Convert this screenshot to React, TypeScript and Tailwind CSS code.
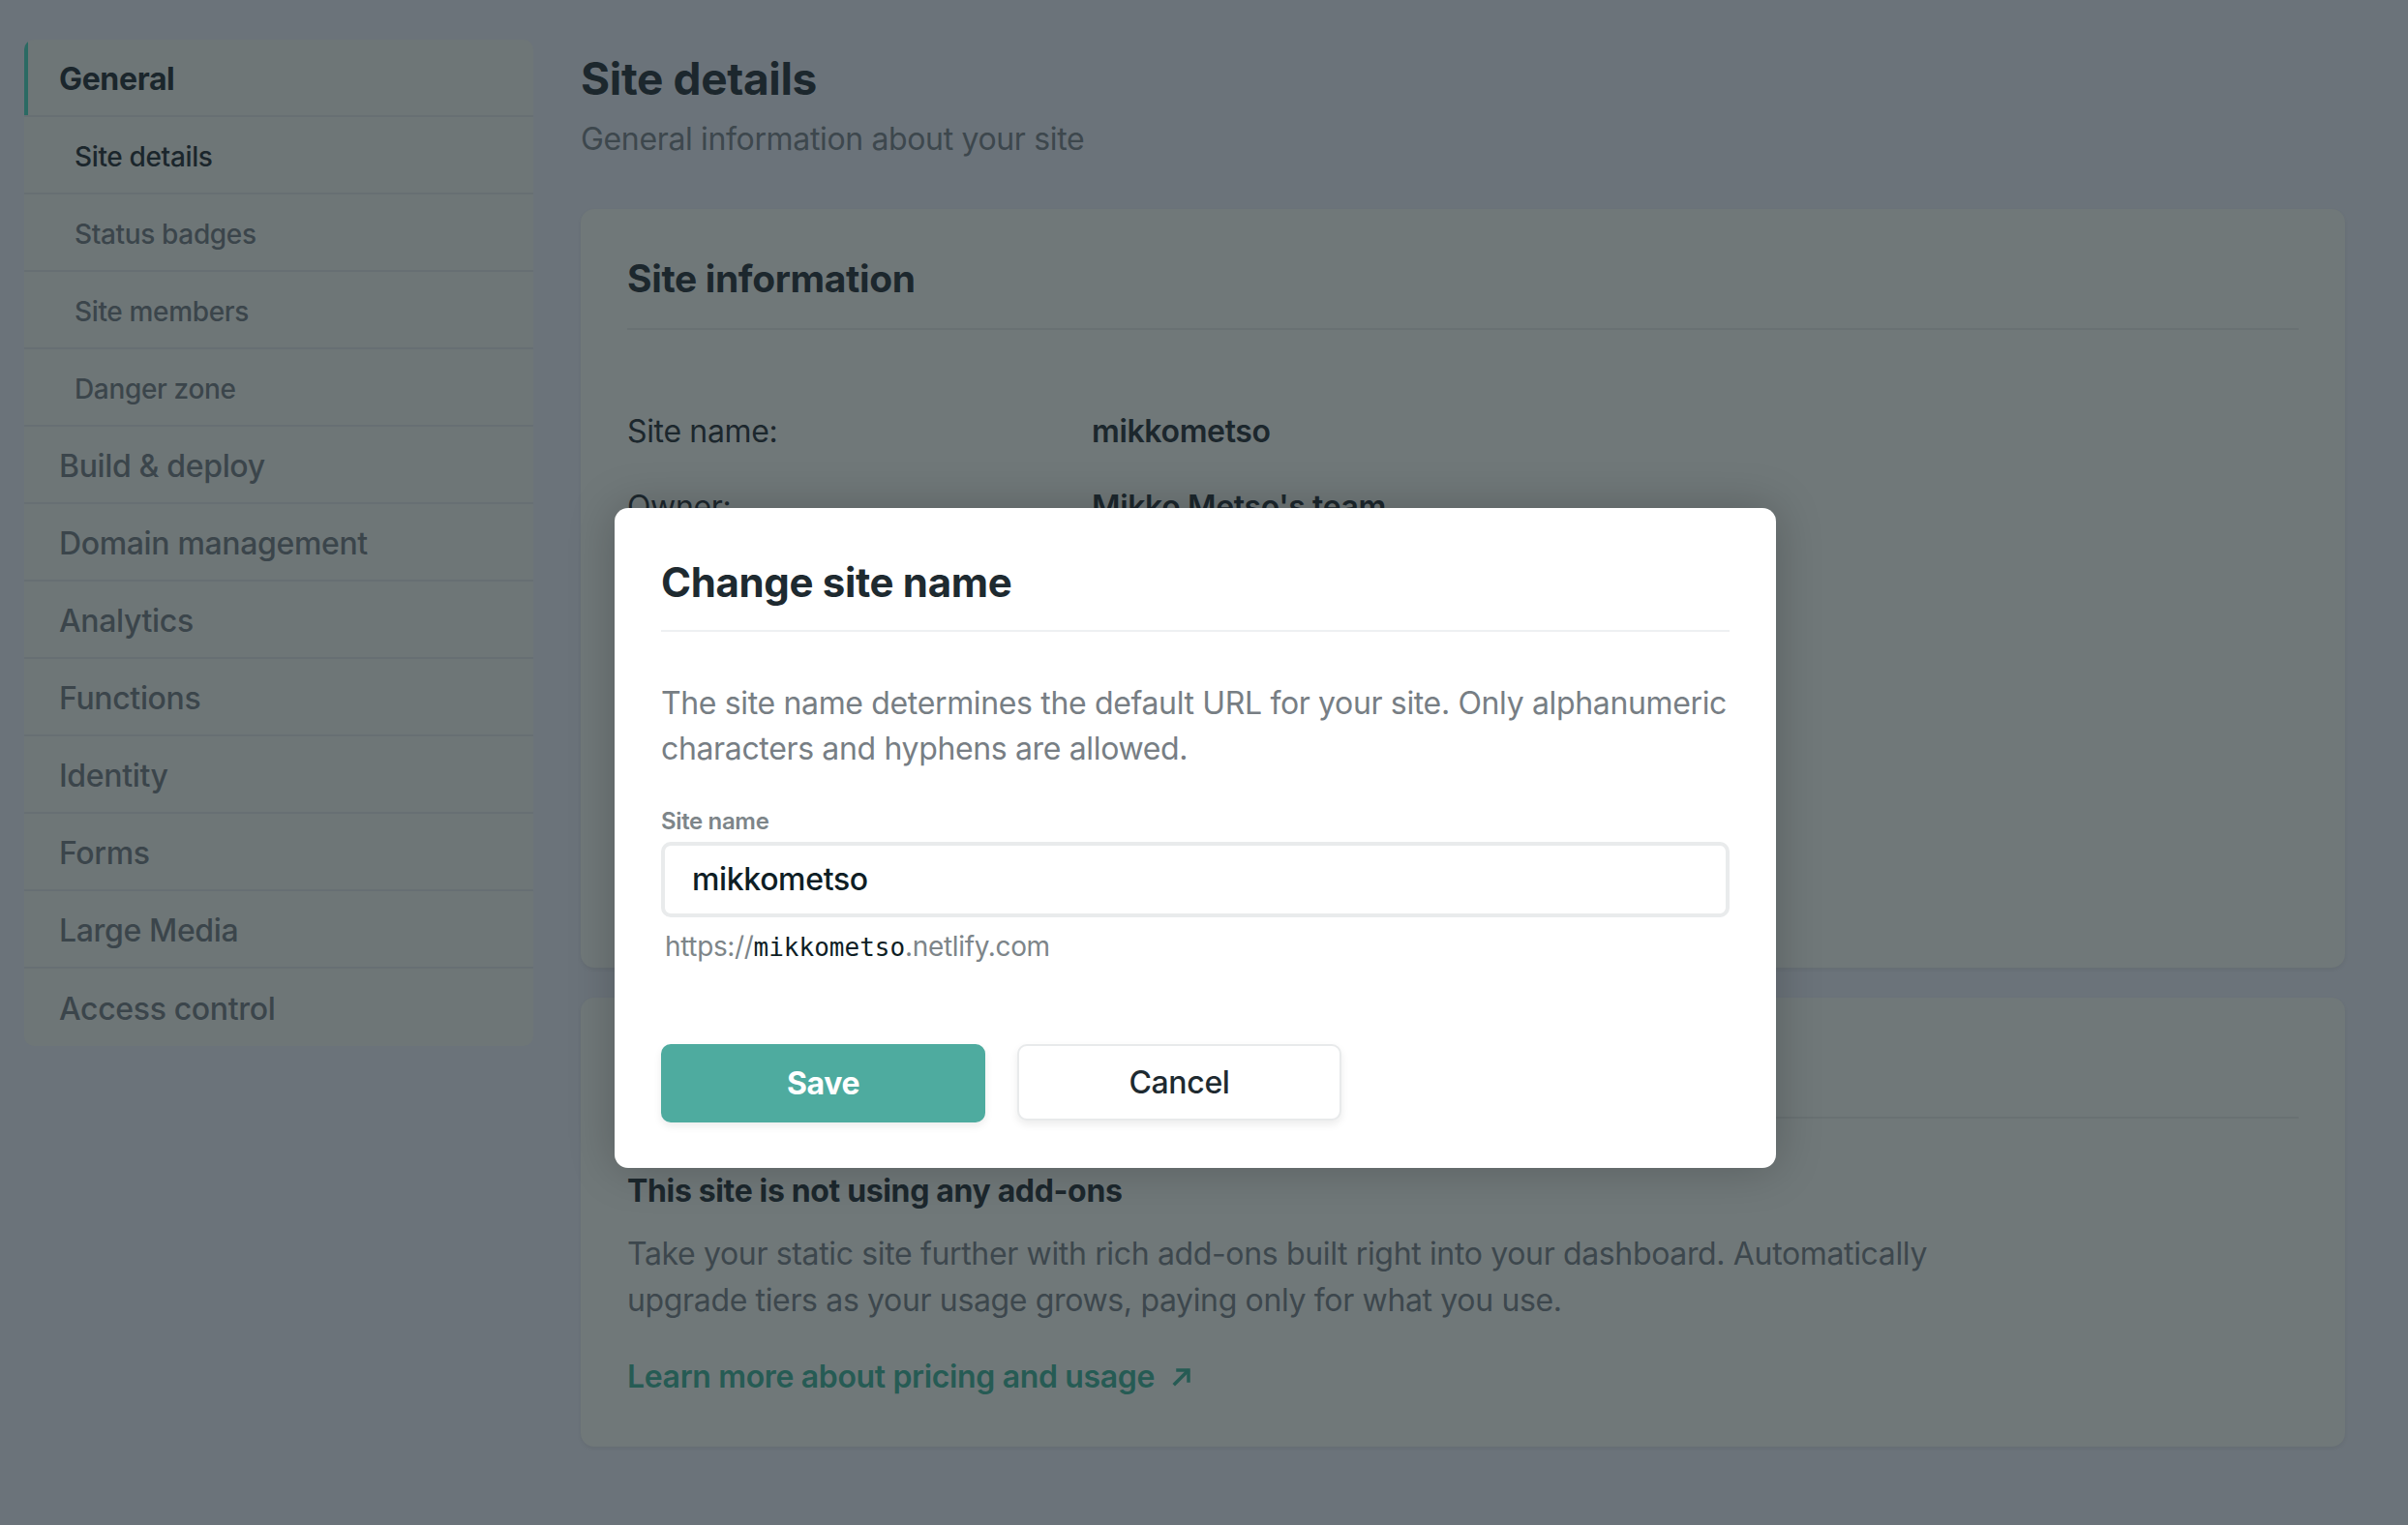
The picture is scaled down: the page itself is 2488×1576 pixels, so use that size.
import React from "react";

const font = { fontFamily: "Inter, 'Noto Sans', sans-serif" };

function SideItem({ label, sub, active, dark }: { label: string; sub?: boolean; active?: boolean; dark?: boolean }) {
  return (
    <div
      className={
        "relative flex h-[80px] items-center border-b-2 border-[#676f73] pt-[4px] " +
        (sub ? "pl-[52px] text-[28px] font-medium " : "pl-[36px] text-[32px] font-medium ") +
        (dark ? "text-[#1b262c] " : "text-[#3b454b] ")
      }
    >
      {active && <div className="absolute left-0 top-0 h-full w-[4px] bg-[#2b6a63]" />}
      <span className={active ? "font-bold" : ""}>{label}</span>
    </div>
  );
}

function InfoRow({ label, value }: { label: string; value: string }) {
  return (
    <div className="flex h-[78px] items-center text-[32px] text-[#1c272d]">
      <div className="w-[480px]">{label}</div>
      <div className="font-semibold">{value}</div>
    </div>
  );
}

export default function App() {
  return (
    <div style={font} className="relative h-[1576px] w-[2488px] overflow-hidden bg-[#6b737a] tracking-[-0.022em]">
      <div className="flex gap-[49px] pl-[25px] pt-[41px]">
        {/* Sidebar */}
        <div className="w-[526px] shrink-0 self-start overflow-hidden rounded-[10px] bg-[#6e7677] [&>div:last-child]:border-b-0">
          <SideItem label="General" active dark />
          <SideItem label="Site details" sub dark />
          <SideItem label="Status badges" sub />
          <SideItem label="Site members" sub />
          <SideItem label="Danger zone" sub />
          <SideItem label="Build & deploy" />
          <SideItem label="Domain management" />
          <SideItem label="Analytics" />
          <SideItem label="Functions" />
          <SideItem label="Identity" />
          <SideItem label="Forms" />
          <SideItem label="Large Media" />
          <SideItem label="Access control" />
        </div>

        {/* Main */}
        <div className="flex w-[1823px] flex-col">
          <h1 className="pt-[2px] text-[46px] font-bold leading-[76px] text-[#1c272d]">Site details</h1>
          <p className="text-[32px] leading-[50px] text-[#3d474d]">General information about your site</p>

          <div className="mt-[47px] h-[784px] rounded-[14px] bg-[#707879] px-[48px] pt-[43px] shadow-[0_2px_4px_rgba(0,0,0,0.06)]">
            <div className="border-b-2 border-[#697173] pb-[24px]">
              <h2 className="pt-[2px] text-[39px] font-bold leading-[54px] text-[#1c272d]">Site information</h2>
            </div>
            <div className="mt-[66px] flex flex-col">
              <InfoRow label="Site name:" value="mikkometso" />
              <InfoRow label="Owner:" value="Mikko Metso's team" />
            </div>
          </div>

          <div className="mt-[31px] rounded-[14px] bg-[#707879] px-[48px] pb-[48px] pt-[43px] shadow-[0_2px_4px_rgba(0,0,0,0.06)]">
            <div className="h-[56px] border-b-2 border-[#697173] pb-[24px] box-content" />
            <h3 className="mt-[51px] text-[32px] font-bold leading-[48px] text-[#1c272d]">This site is not using any add-ons</h3>
            <p className="mt-[17px] max-w-[1380px] text-[32px] leading-[48px] text-[#3d474d]">
              Take your static site further with rich add-ons built right into your dashboard. Automatically upgrade tiers as your usage grows, paying only for what you use.
            </p>
            <a className="mt-[31px] flex items-center gap-[16px] text-[32px] font-semibold leading-[48px] text-[#265b54]">
              Learn more about pricing and usage
              <svg width="24" height="24" viewBox="0 0 24 24" fill="none" stroke="#265b54" strokeWidth="3.5" strokeLinecap="square">
                <path d="M5 19L18 6" />
                <path d="M8 5h11v11" />
              </svg>
            </a>
          </div>
        </div>
      </div>

      {/* Modal */}
      <div className="absolute left-[635px] top-[525px] w-[1200px] rounded-[14px] bg-white px-[48px] pb-[47px] pt-[48px] shadow-[0_0_48px_rgba(0,0,0,0.22)]">
        <div className="border-b-2 border-[#eef0f2] pb-[20px]">
          <h2 className="text-[42px] font-bold leading-[58px] text-[#1e2a30]">Change site name</h2>
        </div>
        <p className="mt-[50px] text-[32px] leading-[47px] text-[#777e84]">
          The site name determines the default URL for your site. Only alphanumeric characters and hyphens are allowed.
        </p>
        <label className="mt-[36px] block text-[24px] font-semibold leading-[32px] text-[#7d8589]">Site name</label>
        <div className="mt-[5px] flex h-[78px] items-center rounded-[10px] border-4 border-[#e9ebec] pl-[28px] text-[32px] font-medium text-[#0e1e25]">
          mikkometso
        </div>
        <div className="mt-[10px] pl-[4px] text-[28px] leading-[40px] text-[#7d8589]">
          https://<span className="text-[26px] tracking-normal text-[#0e1e25]" style={{ fontFamily: "'DejaVu Sans Mono', 'Liberation Mono', monospace" }}>mikkometso</span>.netlify.com
        </div>
        <div className="mt-[80px] flex gap-[33px]">
          <button className="flex h-[81px] w-[335px] items-center justify-center rounded-[10px] bg-[#4eab9f] text-[32px] font-bold text-white shadow-[0_4px_8px_rgba(0,0,0,0.08)]">
            Save
          </button>
          <button className="flex h-[79px] w-[335px] items-center justify-center rounded-[10px] border-2 border-[#e8eaeb] bg-white text-[32px] font-medium text-[#1e2a30] shadow-[0_4px_8px_rgba(0,0,0,0.08)]">
            Cancel
          </button>
        </div>
      </div>
    </div>
  );
}
